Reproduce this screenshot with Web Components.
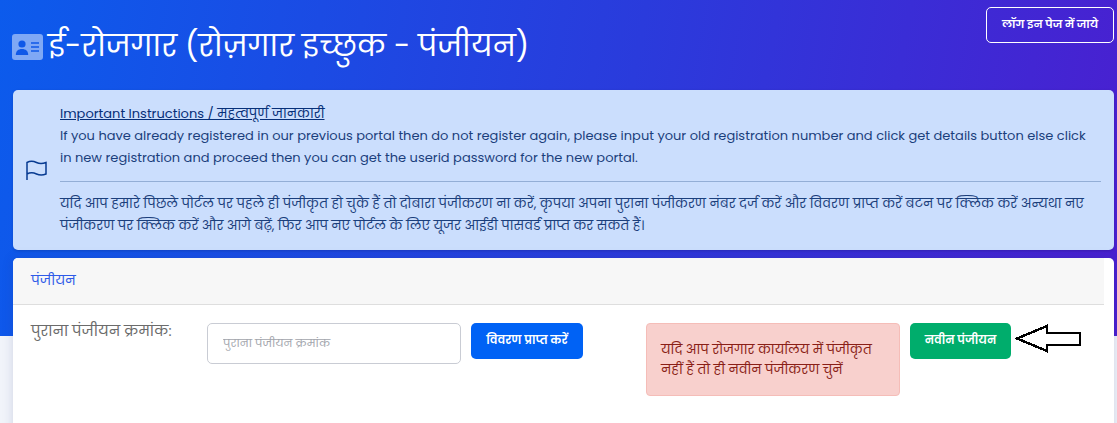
<!DOCTYPE html>
<html lang="hi">
<head>
<meta charset="utf-8">
<title>ई-रोजगार</title>
<style>
  html, body { margin: 0; height: 100%; overflow: hidden; }
  body { background: #f1f4fa; font-family: Poppins, "Noto Sans Devanagari", "Noto Sans", Lato, sans-serif; }
</style>
</head>
<body>
<reg-page></reg-page>
<script>
const FONT = 'Poppins, "Noto Sans Devanagari", "Noto Sans", Lato, sans-serif';

class RegHeader extends HTMLElement {
  constructor() {
    super();
    this.attachShadow({ mode: 'open' });
    this.shadowRoot.innerHTML = `
      <style>
        :host { display: flex; justify-content: space-between; align-items: flex-start; height: 90px; }
        h1 { margin: 24px 0 0 -1px; display: flex; align-items: center; gap: 5px; font: 400 29.500px/44px ${FONT}; color: #fff; white-space: nowrap; }
        svg { width: 31px; height: 26px; flex: none; margin-top: 2px; }
        a { margin-top: 7px; width: 128px; height: 36px; box-sizing: border-box; border: 1px solid #fff; border-radius: 5px; text-decoration: none;
            display: flex; align-items: center; justify-content: center; color: #fff; font: 600 11.200px/1 ${FONT}; white-space: nowrap; }
      </style>
      <h1>
        <svg viewBox="0 0 31 26" aria-hidden="true">
          <rect width="31" height="26" rx="3" fill="#7fa8f5"/>
          <circle cx="10" cy="10" r="3.600" fill="#0f58e8"/>
          <path d="M3.800 21c0-4 2.400-6 6.200-6s6.200 2 6.200 6z" fill="#0f58e8"/>
          <path d="M19 9h8M19 13h8M19 17h8" stroke="#0f58e8" stroke-width="1.700"/>
        </svg>
        <slot></slot>
      </h1>
      <a href="#"><slot name="action"></slot></a>`;
  }
}

class NoticeBox extends HTMLElement {
  constructor() {
    super();
    this.attachShadow({ mode: 'open' });
    this.shadowRoot.innerHTML = `
      <style>
        :host { display: grid; grid-template-columns: 34px 1fr; align-items: center; background: #cbdefd; border-radius: 5px;
                padding: 0 13px; color: #073a91; font: 400 13px/22px ${FONT}; box-shadow: 0 1px 3px rgba(0,0,30,.18); height: 160px; box-sizing: border-box; }
        svg { width: 21px; height: 21px; margin-top: 1px; }
        .body { min-width: 0; }
        .t { text-decoration: underline; color: #062f78; }
        hr { border: 0; border-top: 1px solid #93aed6; margin: 12px 0 11px; }
        p { margin: 0; padding-right: 8px; color: #1b3f7c; }
      </style>
      <svg viewBox="0 0 21 21" fill="none" stroke="#073a91" stroke-width="1.500" aria-hidden="true">
        <path d="M1 20V2.500c3-1.600 6-1.600 9.500 0s6 1.300 9.500 0V14c-3 1.300-6 1.600-9.500 0S4 12.500 1 14"/>
      </svg>
      <div class="body">
        <div class="t"><slot name="title"></slot></div>
        <p><slot name="en"></slot></p>
        <hr>
        <p><slot name="hi"></slot></p>
      </div>`;
  }
}

class RegCard extends HTMLElement {
  constructor() {
    super();
    this.attachShadow({ mode: 'open' });
    this.shadowRoot.innerHTML = `
      <style>
        :host { display: block; background: #fff; border-radius: 5px 5px 0 0; height: 180px; box-shadow: 0 0 12px rgba(40,50,120,.16); }
        header { height: 47px; box-sizing: border-box; padding: 0 18px; background: #f7f7f7; border-bottom: 1px solid #dedede; border-radius: 5px 0 0 0;
                 display: flex; align-items: center; color: #2f5be8; font: 400 13.500px/1 ${FONT}; margin-right: 10px; }
        .row { display: flex; align-items: flex-start; padding: 18px 0 0 18px; }
      </style>
      <header><slot name="title"></slot></header>
      <div class="row"><slot></slot></div>`;
  }
}

class OldRegForm extends HTMLElement {
  constructor() {
    super();
    this.attachShadow({ mode: 'open' });
    this.shadowRoot.innerHTML = `
      <style>
        :host { display: flex; align-items: flex-start; }
        label { width: 176px; color: #6b6b6b; font: 400 14.500px/16px ${FONT}; white-space: nowrap; }
        input { width: 254px; height: 41px; box-sizing: border-box; border: 1px solid #c9ccd4; border-radius: 5px; padding: 0 15px;
                font: 400 11.300px/1 ${FONT}; outline: none; margin-right: 10px; }
        input::placeholder { color: #a3a6ad; opacity: 1; }
      </style>
      <label>पुराना पंजीयन क्रमांक:</label>
      <input placeholder="पुराना पंजीयन क्रमांक">
      <slot></slot>`;
  }
}

class ActionButton extends HTMLElement {
  static get observedAttributes() { return ['color', 'width']; }
  constructor() {
    super();
    this.attachShadow({ mode: 'open' });
    this.shadowRoot.innerHTML = `
      <style>
        :host { display: inline-flex; height: 36px; align-items: center; justify-content: center; border-radius: 5px; color: #fff;
                font: 600 11.500px/1 ${FONT}; white-space: nowrap; background: var(--bg, #0062f5); width: var(--w, 112px); flex: none; }
      </style>
      <slot></slot>`;
  }
  attributeChangedCallback(name, oldValue, newValue) {
    if (name === 'color') this.style.setProperty('--bg', newValue);
    if (name === 'width') this.style.setProperty('--w', newValue + 'px');
  }
}

class WarnBox extends HTMLElement {
  constructor() {
    super();
    this.attachShadow({ mode: 'open' });
    this.shadowRoot.innerHTML = `
      <style>
        :host { display: block; width: 254px; height: 73px; box-sizing: border-box; padding: 16px 14px; background: #f8d0cd; border: 1px solid #f5bdb8;
                border-radius: 4px; color: #8a1f17; font: 400 13px/19.500px ${FONT}; margin: 0 10px 0 63px; flex: none; }
      </style>
      <slot></slot>`;
  }
}

class ArrowMark extends HTMLElement {
  constructor() {
    super();
    this.attachShadow({ mode: 'open' });
    this.shadowRoot.innerHTML = `
      <style>
        :host { display: block; width: 67px; height: 30px; margin: 1px 0 0 4px; flex: none; }
        svg { display: block; width: 100%; height: 100%; shape-rendering: crispEdges; }
      </style>
      <svg viewBox="0 0 67 30" aria-hidden="true">
        <path d="M2 14.500 32 2v7h33v12H32v6z" fill="#fff" stroke="#000" stroke-width="2.500"/>
      </svg>`;
  }
}

class RegPage extends HTMLElement {
  constructor() {
    super();
    this.attachShadow({ mode: 'open' });
    this.shadowRoot.innerHTML = `
      <style>
        :host { display: block; position: relative; height: 423px; overflow: hidden; }
        .hero { height: 336px; background: linear-gradient(100deg, #0c5bec 0%, #2a3bdc 55%, #4a1fd0 100%); margin-bottom: -336px; }
        .wrap { padding: 0 3px 0 13px; display: flex; flex-direction: column; position: relative; }
      </style>
      <div class="hero"></div>
      <div class="wrap"><slot></slot></div>`;
  }
}

customElements.define('reg-header', RegHeader);
customElements.define('notice-box', NoticeBox);
customElements.define('reg-card', RegCard);
customElements.define('old-reg-form', OldRegForm);
customElements.define('action-button', ActionButton);
customElements.define('warn-box', WarnBox);
customElements.define('arrow-mark', ArrowMark);
customElements.define('reg-page', RegPage);

document.querySelector('reg-page').innerHTML = `
  <reg-header>ई-रोजगार (रोज़गार इच्छुक - पंजीयन)<span slot="action">लॉग इन पेज में जाये</span></reg-header>
  <notice-box>
    <span slot="title">Important Instructions / महत्वपूर्ण जानकारी</span>
    <span slot="en">If you have already registered in our previous portal then do not register again, please input your old registration number and click get details button else click in new registration and proceed then you can get the userid password for the new portal.</span>
    <span slot="hi">यदि आप हमारे पिछले पोर्टल पर पहले ही पंजीकृत हो चुके हैं तो दोबारा पंजीकरण ना करें, कृपया अपना पुराना पंजीकरण नंबर दर्ज करें और विवरण प्राप्त करें बटन पर क्लिक करें अन्यथा नए पंजीकरण पर क्लिक करें और आगे बढ़ें, फिर आप नए पोर्टल के लिए यूजर आईडी पासवर्ड प्राप्त कर सकते हैं।</span>
  </notice-box>
  <reg-card style="margin-top:8px">
    <span slot="title">पंजीयन</span>
    <old-reg-form><action-button>विवरण प्राप्त करें</action-button></old-reg-form>
    <warn-box>यदि आप रोजगार कार्यालय में पंजीकृत नहीं हैं तो ही नवीन पंजीकरण चुनें</warn-box>
    <action-button color="#00ad6c" width="101">नवीन पंजीयन</action-button>
    <arrow-mark></arrow-mark>
  </reg-card>`;
</script>
</body>
</html>
